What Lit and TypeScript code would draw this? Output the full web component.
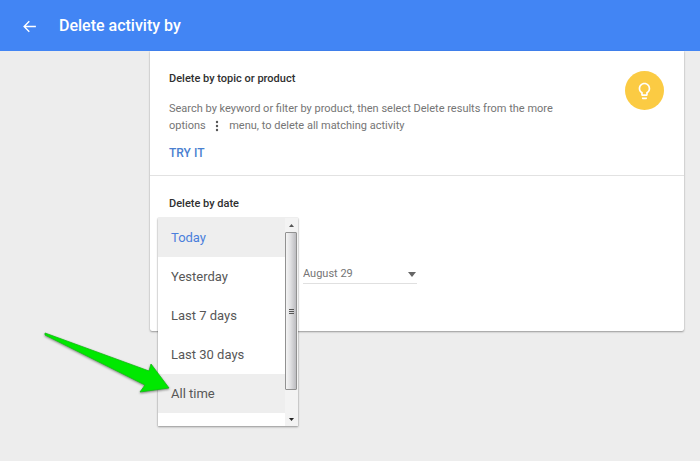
import { LitElement, html, css } from "lit";
import { customElement, state } from "lit/decorators.js";
import { classMap } from "lit/directives/class-map.js";

@customElement("range-menu")
class RangeMenu extends LitElement {
  @state() private selected = "Today";
  private hinted = "All time";
  private options = ["Today", "Yesterday", "Last 7 days", "Last 30 days", "All time"];

  static styles = css`
    :host {
      display: flex;
      box-sizing: border-box;
      width: 140px;
      height: 208px;
      background: #fff;
      box-shadow: 0 1px 2px rgba(0, 0, 0, 0.35), 0 0 1px rgba(0, 0, 0, 0.25);
    }
    .list {
      flex: 1;
      overflow: hidden;
    }
    .option {
      display: block;
      width: 100%;
      height: 39px;
      padding: 0 13px;
      border: 0;
      background: #fff;
      color: #575757;
      font: 400 13px/39px Roboto, sans-serif;
      text-align: left;
      cursor: pointer;
    }
    .hinted,
    .selected {
      background: #eee;
    }
    .selected {
      color: #4a7fdc;
    }
    .scroll {
      display: flex;
      flex-direction: column;
      width: 13px;
      background: #f3f3f3;
    }
    .step {
      display: flex;
      align-items: center;
      justify-content: center;
      height: 14px;
      padding: 0;
      border: 0;
      background: none;
    }
    .track {
      flex: 1;
    }
    .thumb {
      display: flex;
      align-items: center;
      justify-content: center;
      box-sizing: border-box;
      height: 158px;
      margin-right: 1px;
      border: 1px solid #919191;
      border-radius: 1px;
      background: linear-gradient(90deg, #f4f4f4, #e0e0e2 45%, #bcbcc0);
    }
  `;

  render() {
    return html`
      <div class="list" role="listbox" aria-label="Date range">
        ${this.options.map(
          (o) => html`<button
            role="option"
            aria-selected=${o === this.selected}
            class=${classMap({ option: true, selected: o === this.selected, hinted: o === this.hinted })}
            @click=${() => (this.selected = o)}
          >${o}</button>`
        )}
      </div>
      <div class="scroll">
        <button class="step" aria-label="Scroll up">
          <svg width="5" height="3" viewBox="0 0 5 3"><path d="M0 3L2.500 0L5 3z" fill="#555" /></svg>
        </button>
        <div class="track">
          <div class="thumb">
            <svg width="5" height="7" viewBox="0 0 5 7"><path d="M0 1.500H5M0 3.500H5M0 5.500H5" stroke="#555" /></svg>
          </div>
        </div>
        <button class="step" aria-label="Scroll down">
          <svg width="5" height="3" viewBox="0 0 5 3"><path d="M0 0H5L2.500 3z" fill="#222" /></svg>
        </button>
      </div>
    `;
  }
}

@customElement("app-root")
class AppRoot extends LitElement {
  static styles = css`
    :host {
      display: block;
      min-height: 100vh;
      background: #ededed;
      font-family: Roboto, sans-serif;
      color: #757575;
    }
    .bar {
      display: flex;
      align-items: center;
      gap: 21px;
      height: 51px;
      padding: 0 21px;
      background: #4285f4;
    }
    .back {
      display: flex;
      padding: 0;
      border: 0;
      background: none;
      margin-top: 2px;
    }
    .title {
      margin: 0;
      color: #fff;
      font-size: 16px;
      font-weight: 500;
      line-height: 24px;
    }
    .card {
      margin: 0 16px 0 150px;
      background: #fff;
      border-radius: 0 0 2px 2px;
      box-shadow: 0 1px 2px rgba(0, 0, 0, 0.35), 0 0 1px rgba(0, 0, 0, 0.2);
    }
    .topic {
      display: flex;
      justify-content: space-between;
      gap: 16px;
      padding: 20px 20px 14px 19px;
      border-bottom: 1px solid #e2e2e2;
    }
    .copy {
      max-width: 412px;
    }
    .heading {
      margin: 0;
      color: #303030;
      font-size: 11px;
      font-weight: 500;
      line-height: 16px;
    }
    .text {
      margin: 13px 0 8px;
      font-size: 11px;
      line-height: 17px;
    }
    .keep {
      white-space: nowrap;
    }
    .more {
      margin: 0 6px;
      vertical-align: -3px;
    }
    .link {
      display: inline-block;
      color: #4a80d0;
      font-size: 12px;
      font-weight: 500;
      line-height: 16px;
      text-decoration: none;
    }
    .tip {
      flex: none;
      width: 39px;
      height: 39px;
    }
    .date {
      padding: 20px 20px 47px 19px;
    }
    .fields {
      display: flex;
      margin-top: 53px;
    }
    .anchor {
      position: relative;
      width: 134px;
    }
    .menu {
      position: absolute;
      top: -47px;
      left: -11px;
      z-index: 1;
    }
    .field {
      position: relative;
      display: flex;
      align-items: center;
      width: 114px;
      height: 18px;
      border-bottom: 1px solid #e0e0e0;
    }
    .select {
      appearance: none;
      width: 100%;
      padding: 0;
      border: 0;
      background: none;
      color: #757575;
      font: 400 11px/16px Roboto, sans-serif;
    }
    .caret {
      position: absolute;
      right: 1px;
      pointer-events: none;
    }
    .pointer {
      position: absolute;
      top: 66px;
      left: -128px;
      z-index: 2;
      filter: drop-shadow(0 1px 1px rgba(0, 0, 0, 0.45));
      pointer-events: none;
    }
  `;

  render() {
    return html`
      <header class="bar">
        <button class="back" aria-label="Back">
          <svg width="17" height="17" viewBox="0 0 24 24" fill="#fff">
            <path d="M21 11H6.830l5.580-5.590L11 4l-8 8 8 8 1.410-1.410L6.830 13H21z" />
          </svg>
        </button>
        <h1 class="title">Delete activity by</h1>
      </header>
      <main class="card">
        <section class="topic">
          <div class="copy">
            <h2 class="heading">Delete by topic or product</h2>
            <p class="text">
              Search by keyword or filter by product, then select Delete results from the more
              <span class="keep">options
                <svg class="more" width="6" height="12" viewBox="0 0 6 12" fill="#555">
                  <circle cx="3" cy="2" r="1.200" /><circle cx="3" cy="6" r="1.200" /><circle cx="3" cy="10" r="1.200" />
                </svg></span>
              menu, to delete all matching activity
            </p>
            <a class="link" href="#">TRY IT</a>
          </div>
          <svg class="tip" viewBox="0 0 39 39">
            <circle cx="19.500" cy="19.500" r="19.500" fill="#fbcb43" />
            <g transform="translate(9.500 10) scale(.83)" fill="#fff">
              <path d="M9 21c0 .550.450 1 1 1h4c.550 0 1-.450 1-1v-1H9v1zm3-19C8.140 2 5 5.140 5 9c0 2.380 1.190 4.470 3 5.740V17c0 .550.450 1 1 1h6c.550 0 1-.450 1-1v-2.260c1.810-1.270 3-3.360 3-5.740 0-3.860-3.140-7-7-7zm2.850 11.100l-.850.600V16h-4v-2.300l-.850-.600C7.800 12.160 7 10.630 7 9c0-2.760 2.240-5 5-5s5 2.240 5 5c0 1.630-.800 3.160-2.150 4.100z" />
            </g>
          </svg>
        </section>
        <section class="date">
          <h2 class="heading">Delete by date</h2>
          <div class="fields">
            <div class="anchor">
              <range-menu class="menu"></range-menu>
              <svg class="pointer" width="130" height="66" viewBox="0 0 130 66">
                <path d="M4 2L108 40L110 33L128 57L99 61L104 54L4 4z" fill="#00e800" stroke="#12bd12" stroke-width=".8" />
              </svg>
            </div>
            <div class="field">
              <select class="select" aria-label="End date"><option>August 29</option></select>
              <svg class="caret" width="8" height="5" viewBox="0 0 8 5"><path d="M0 0H8L4 5z" fill="#666" /></svg>
            </div>
          </div>
        </section>
      </main>
    `;
  }
}
